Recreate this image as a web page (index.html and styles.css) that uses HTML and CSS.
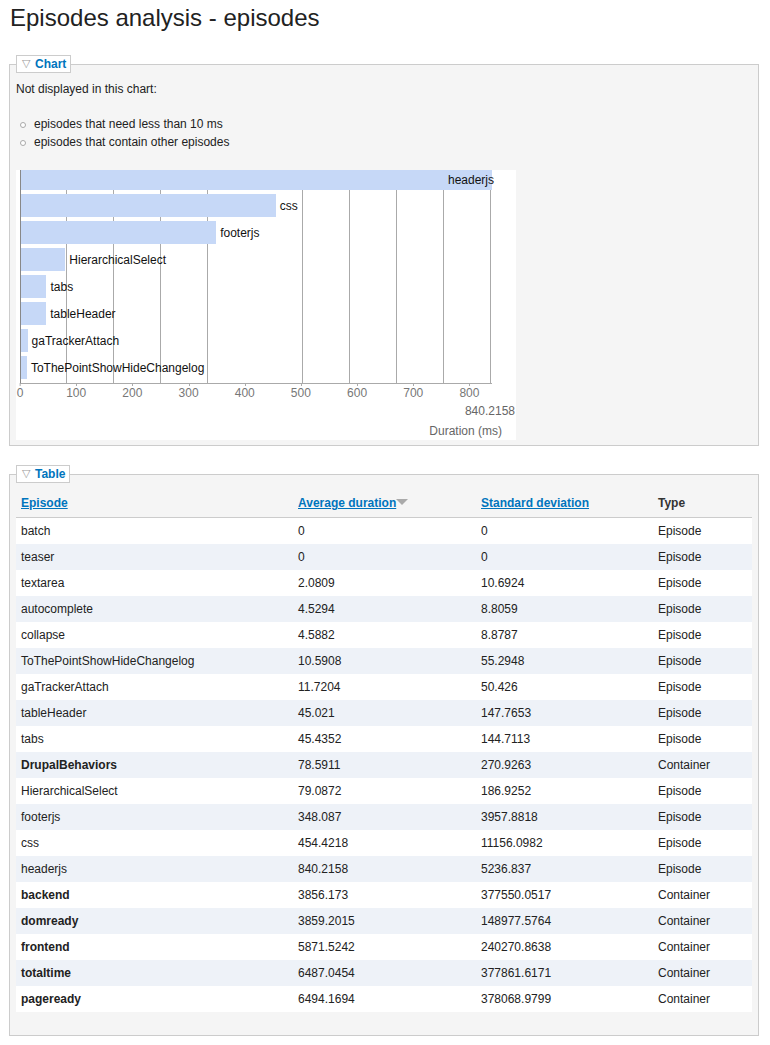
FILE: index.html
```html
<!DOCTYPE html>
<html>
<head>
<meta charset="utf-8">
<title>Episodes analysis - episodes</title>
<link rel="stylesheet" href="styles.css">
</head>
<body>
<div class="page">
  <h1 class="title">Episodes analysis - episodes</h1>

  <fieldset class="box box-chart">
    <legend class="legend"><span class="tri">&#9661;</span><a class="legend-link">Chart</a></legend>
    <p class="note">Not displayed in this chart:</p>
    <ul class="exclusions">
      <li>episodes that need less than 10 ms</li>
      <li>episodes that contain other episodes</li>
    </ul>
    <div class="chart">
      <div class="plot">
        <div class="bars">
          <div class="bar-row bar-row-first"><div class="bar bar-inside" style="width:100%"><span class="bar-label">headerjs</span></div></div>
          <div class="bar-row"><div class="bar" style="width:54.08%"></div><span class="bar-label">css</span></div>
          <div class="bar-row"><div class="bar" style="width:41.43%"></div><span class="bar-label">footerjs</span></div>
          <div class="bar-row"><div class="bar" style="width:9.41%"></div><span class="bar-label">HierarchicalSelect</span></div>
          <div class="bar-row"><div class="bar" style="width:5.41%"></div><span class="bar-label">tabs</span></div>
          <div class="bar-row"><div class="bar" style="width:5.36%"></div><span class="bar-label">tableHeader</span></div>
          <div class="bar-row"><div class="bar" style="width:1.39%"></div><span class="bar-label">gaTrackerAttach</span></div>
          <div class="bar-row"><div class="bar" style="width:1.26%"></div><span class="bar-label">ToThePointShowHideChangelog</span></div>
        </div>
      </div>
      <div class="ticks">
        <span class="tick" style="left:0%">0</span>
        <span class="tick" style="left:11.90%">100</span>
        <span class="tick" style="left:23.80%">200</span>
        <span class="tick" style="left:35.71%">300</span>
        <span class="tick" style="left:47.61%">400</span>
        <span class="tick" style="left:59.51%">500</span>
        <span class="tick" style="left:71.41%">600</span>
        <span class="tick" style="left:83.31%">700</span>
        <span class="tick" style="left:95.21%">800</span>
      </div>
      <div class="axis-max">840.2158</div>
      <div class="axis-title">Duration (ms)</div>
    </div>
  </fieldset>

  <fieldset class="box box-table">
    <legend class="legend"><span class="tri">&#9661;</span><a class="legend-link">Table</a></legend>
    <table class="data">
      <thead>
        <tr>
          <th class="c1"><a class="sort">Episode</a></th>
          <th class="c2"><a class="sort">Average duration<span class="arrow"></span></a></th>
          <th class="c3"><a class="sort">Standard deviation</a></th>
          <th class="c4">Type</th>
        </tr>
      </thead>
      <tbody>
        <tr><td>batch</td><td>0</td><td>0</td><td>Episode</td></tr>
        <tr><td>teaser</td><td>0</td><td>0</td><td>Episode</td></tr>
        <tr><td>textarea</td><td>2.0809</td><td>10.6924</td><td>Episode</td></tr>
        <tr><td>autocomplete</td><td>4.5294</td><td>8.8059</td><td>Episode</td></tr>
        <tr><td>collapse</td><td>4.5882</td><td>8.8787</td><td>Episode</td></tr>
        <tr><td>ToThePointShowHideChangelog</td><td>10.5908</td><td>55.2948</td><td>Episode</td></tr>
        <tr><td>gaTrackerAttach</td><td>11.7204</td><td>50.426</td><td>Episode</td></tr>
        <tr><td>tableHeader</td><td>45.021</td><td>147.7653</td><td>Episode</td></tr>
        <tr><td>tabs</td><td>45.4352</td><td>144.7113</td><td>Episode</td></tr>
        <tr><td class="strong">DrupalBehaviors</td><td>78.5911</td><td>270.9263</td><td>Container</td></tr>
        <tr><td>HierarchicalSelect</td><td>79.0872</td><td>186.9252</td><td>Episode</td></tr>
        <tr><td>footerjs</td><td>348.087</td><td>3957.8818</td><td>Episode</td></tr>
        <tr><td>css</td><td>454.4218</td><td>11156.0982</td><td>Episode</td></tr>
        <tr><td>headerjs</td><td>840.2158</td><td>5236.837</td><td>Episode</td></tr>
        <tr><td class="strong">backend</td><td>3856.173</td><td>377550.0517</td><td>Container</td></tr>
        <tr><td class="strong">domready</td><td>3859.2015</td><td>148977.5764</td><td>Container</td></tr>
        <tr><td class="strong">frontend</td><td>5871.5242</td><td>240270.8638</td><td>Container</td></tr>
        <tr><td class="strong">totaltime</td><td>6487.0454</td><td>377861.6171</td><td>Container</td></tr>
        <tr><td class="strong">pageready</td><td>6494.1694</td><td>378068.9799</td><td>Container</td></tr>
      </tbody>
    </table>
  </fieldset>
</div>
</body>
</html>
```

FILE: styles.css
```css
html, body {
  margin: 0;
  padding: 0;
  background: #fff;
}

body {
  font-family: "Liberation Sans", Arial, Helvetica, sans-serif;
  font-size: 12px;
  color: #222;
}

.page {
  padding: 0 11px 0 9px;
}

.title {
  margin: 0;
  padding-top: 4px;
  font-size: 24px;
  line-height: 28px;
  font-weight: normal;
  color: #222;
  padding-left: 1px;
}

.box {
  margin: 23px 0 0 0;
  border: 1px solid #ccc;
  background: #f5f5f5;
  padding: 8px 6px 5px 6px;
  min-width: 0;
}

.box-table {
  margin-top: 19px;
  padding: 7px 6px 23px 6px;
}

.legend {
  background: #fff;
  border: 1px solid #ccc;
  padding: 0 4px 0 5px;
  line-height: 16px;
  font-size: 12px;
  margin-left: 0;
}

.tri {
  color: #999;
  font-size: 11px;
  margin-right: 5px;
  position: relative;
  top: -1px;
}

.legend-link {
  color: #0074bd;
  font-weight: bold;
}

.note {
  margin: 0;
  line-height: 16px;
}

.exclusions {
  list-style: none;
  margin: 18px 0 0 0;
  padding: 0;
}

.exclusions li {
  line-height: 18px;
  padding-left: 18px;
  position: relative;
}

.exclusions li::before {
  content: "";
  position: absolute;
  left: 4px;
  top: 7px;
  width: 4px;
  height: 4px;
  border: 1px solid #aaa;
  border-radius: 50%;
  background: #fff;
}

.chart {
  margin-top: 19px;
  width: 500px;
  height: 270px;
  background: #fff;
  padding-left: 4px;
  box-sizing: border-box;
}

.plot {
  width: 472px;
  height: 214px;
  box-sizing: border-box;
  border-left: 1px solid #888;
  border-bottom: 1px solid #aaa;
  background-image: repeating-linear-gradient(to right, transparent 0, transparent calc(10% - 1px), #aaa calc(10% - 1px), #aaa 10%);
  background-position: -1px 0;
}

.bars {
  display: flex;
  flex-direction: column;
  gap: 4px;
}

.bar-row {
  display: flex;
  align-items: center;
  height: 23px;
}

.bar-row-first {
  height: 20px;
}

.bar-row-first .bar {
  height: 20px;
}

.bar {
  height: 23px;
  background: #c6d8f7;
  flex: none;
}

.bar-inside {
  display: flex;
  justify-content: flex-end;
  align-items: center;
}

.bar-label {
  margin-left: 4px;
  font-size: 12px;
  color: #111;
  white-space: nowrap;
}

.bar-inside .bar-label {
  margin-right: -2px;
  padding-bottom: 1px;
}

.ticks {
  position: relative;
  width: 472px;
  height: 16px;
}

.tick {
  position: absolute;
  top: 2px;
  transform: translateX(-50%);
  color: #777;
  font-size: 12px;
  line-height: 14px;
}

.tick::before {
  content: "";
  position: absolute;
  left: 50%;
  top: -3px;
  height: 3px;
  border-left: 1px solid #aaa;
}

.axis-max {
  text-align: right;
  color: #666;
  line-height: 14px;
  margin-top: 4px;
  padding-right: 1px;
}

.axis-title {
  text-align: right;
  color: #666;
  line-height: 14px;
  margin-top: 6px;
  padding-right: 14px;
}

.data {
  width: 736px;
  border-collapse: collapse;
  table-layout: fixed;
}

.data th {
  text-align: left;
  font-weight: bold;
  padding: 6px 5px 7px 5px;
  line-height: 14px;
  border-bottom: 1px solid #ccc;
  color: #333;
  box-sizing: border-box;
}

.c1 { width: 277px; }
.c2 { width: 183px; }
.c3 { width: 177px; }
.c4 { width: 99px; }

.sort {
  color: #0074bd;
  text-decoration: underline;
}

.arrow {
  display: inline-block;
  width: 0;
  height: 0;
  border-left: 6px solid transparent;
  border-right: 6px solid transparent;
  border-top: 6px solid #aaa;
  vertical-align: 2px;
  margin-left: 0;
}

.data td {
  padding: 6px 5px;
  line-height: 14px;
  height: 14px;
  color: #222;
  white-space: nowrap;
}

.data tbody tr:nth-child(odd) {
  background: #fff;
}

.data tbody tr:nth-child(even) {
  background: #eef2f8;
}

.strong {
  font-weight: bold;
}
```
